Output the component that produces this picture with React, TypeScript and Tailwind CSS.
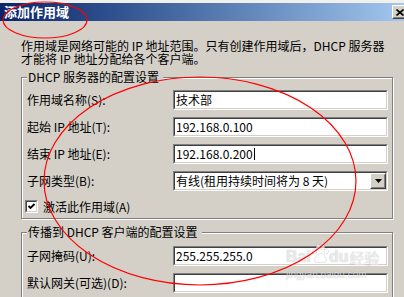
import React from "react";

function Sunken({ className, children }: { className: string; children?: React.ReactNode }) {
  return (
    <div className={`border border-t-[#808080] border-l-[#808080] border-b-white border-r-white ${className}`}>
      <div className="h-full flex items-center bg-white border border-t-[#404040] border-l-[#404040] border-b-[#d4d0c8] border-r-[#d4d0c8]">
        {children}
      </div>
    </div>
  );
}

function Raised({ className, children }: { className: string; children?: React.ReactNode }) {
  return (
    <div className={`bg-[#d4d0c8] border border-t-white border-l-white border-b-[#404040] border-r-[#404040] ${className}`}>
      <div className="h-full flex items-center justify-center border border-t-[#d4d0c8] border-l-[#d4d0c8] border-b-[#808080] border-r-[#808080]">
        {children}
      </div>
    </div>
  );
}

function GroupBox({ title, children, className }: { title: string; children: React.ReactNode; className: string }) {
  return (
    <fieldset
      className={`ml-[21px] w-[372px] border border-[#808080] shadow-[inset_1px_1px_0_#fff,1px_1px_0_#fff] pl-[5px] pr-[4px] ${className}`}
    >
      <legend className="pl-[1px] pr-[4px] bg-[#d4d0c8] leading-[12px]">{title}</legend>
      {children}
    </fieldset>
  );
}

function Row({ label, children }: { label: string; children: React.ReactNode }) {
  return (
    <div className="flex items-center h-[20px]">
      <div className="w-[146px] shrink-0 leading-[12px]">{label}</div>
      {children}
    </div>
  );
}

function TextBox({ value, caret }: { value: string; caret?: boolean }) {
  return (
    <Sunken className="w-[215px] h-[20px]">
      <span className="pl-[1px] leading-[12px] whitespace-nowrap">{value}</span>
      {caret && <span className="inline-block w-[1px] h-[12px] bg-black ml-[1px]" />}
    </Sunken>
  );
}

export default function App() {
  return (
    <div className="relative w-[404px] h-[297px] overflow-hidden bg-[#d4d0c8] text-black text-[12px] font-['Noto_Sans_CJK_SC','Noto_Sans',sans-serif]">
      <div className="w-[410px]">
        {/* window frame + title bar */}
        <div className="h-[3px] bg-[#f1f0ec]" />
        <div className="h-[18px] flex items-center pl-[4px] bg-gradient-to-r from-[#0a246a] to-[#a6caf0]">
          <span className="text-white font-bold text-[13px] leading-[14px]">添加作用域</span>
          <Raised className="ml-auto mr-[2px] w-[16px] h-[14px]">
            <svg width="8" height="7" viewBox="0 0 8 7">
              <path d="M0.5 0.5L7.5 6.5M7.5 0.5L0.5 6.5" stroke="black" strokeWidth="1.6" />
            </svg>
          </Raised>
        </div>

        {/* description */}
        <div className="pt-[18px] pl-[21px] leading-[13px] whitespace-nowrap">
          <div>作用域是网络可能的 IP 地址范围。只有创建作用域后，DHCP 服务器</div>
          <div>才能将 IP 地址分配给各个客户端。</div>
        </div>

        <GroupBox title="DHCP 服务器的配置设置" className="mt-[6px] pt-[7px] pb-[5px]">
          <div className="flex flex-col gap-[7px]">
            <Row label="作用域名称(S):">
              <TextBox value="技术部" />
            </Row>
            <Row label="起始 IP 地址(T):">
              <TextBox value="192.168.0.100" />
            </Row>
            <Row label="结束 IP 地址(E):">
              <TextBox value="192.168.0.200" caret />
            </Row>
            <Row label="子网类型(B):">
              <Sunken className="w-[215px] h-[20px]">
                <span className="flex-1 pl-[1px] leading-[12px] whitespace-nowrap">有线(租用持续时间将为 8 天)</span>
                <Raised className="w-[16px] h-full">
                  <svg width="7" height="4" viewBox="0 0 7 4">
                    <path d="M0 0H7L3.5 4Z" fill="black" />
                  </svg>
                </Raised>
              </Sunken>
            </Row>
          </div>
          <div className="mt-[9px] flex items-center gap-[5px] -ml-[2px] h-[13px]">
            <Sunken className="w-[13px] h-[13px]">
              <svg width="9" height="9" viewBox="0 0 9 9" className="mx-auto">
                <path d="M1.5 4L3.5 6L7.5 2" fill="none" stroke="black" strokeWidth="1.8" />
              </svg>
            </Sunken>
            <span className="leading-[12px]">激活此作用域(A)</span>
          </div>
        </GroupBox>

        <GroupBox title="传播到 DHCP 客户端的配置设置" className="mt-[7px] pt-[8px] pb-[20px]">
          <div className="flex flex-col gap-[7px]">
            <Row label="子网掩码(U):">
              <TextBox value="255.255.255.0" />
            </Row>
            <Row label="默认网关(可选)(D):">
              <TextBox value="" />
            </Row>
          </div>
        </GroupBox>
      </div>

      {/* baidu watermark */}
      <div className="absolute left-[286px] top-[244px] pointer-events-none text-white/70 [text-shadow:0_0_1px_rgba(0,0,0,0.3)]">
        <div className="flex items-end leading-none">
          <span className="text-[16px] font-bold font-['Liberation_Sans',sans-serif]">Bai</span>
          <svg width="18" height="20" viewBox="0 0 20 22" className="mb-[1px]">
            <g fill="rgba(255,255,255,0.7)" stroke="rgba(0,0,0,0.2)" strokeWidth="0.6">
              <ellipse cx="4" cy="8" rx="2.5" ry="3" />
              <ellipse cx="8" cy="3.5" rx="2.3" ry="3" />
              <ellipse cx="13" cy="3.5" rx="2.3" ry="3" />
              <ellipse cx="17" cy="8" rx="2.5" ry="3" />
              <path d="M10.5 10C7 10 4 15 4 18C4 20.5 7 21 10.5 20C14 21 17 20.5 17 18C17 15 14 10 10.5 10Z" />
            </g>
          </svg>
          <span className="text-[16px] font-bold font-['Liberation_Sans',sans-serif]">du</span>
          <span className="text-[15px] ml-[1px]">经验</span>
        </div>
        <div className="text-[10px] leading-[11px] mt-[4px] font-['Liberation_Sans',sans-serif]">jingyan.baidu.com</div>
      </div>

      {/* red annotation ellipses */}
      <svg className="absolute inset-0 pointer-events-none" width="404" height="297" viewBox="0 0 404 297">
        <ellipse cx="45" cy="20" rx="42" ry="18" fill="none" stroke="#ff0000" strokeWidth="1.2" />
        <ellipse cx="200" cy="181" rx="156" ry="104" fill="none" stroke="#ff0000" strokeWidth="1.2" />
      </svg>
    </div>
  );
}
